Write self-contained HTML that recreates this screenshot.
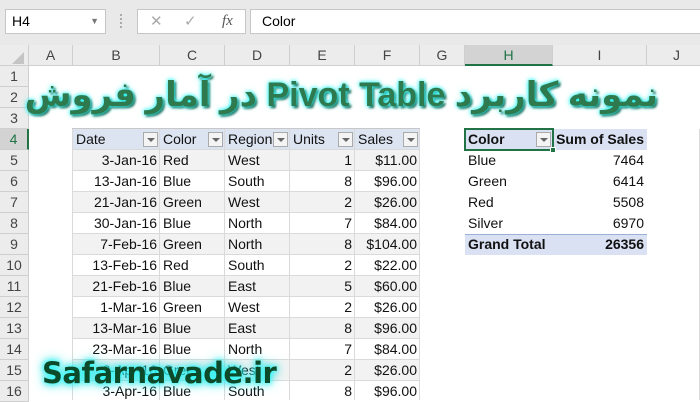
<!DOCTYPE html><html><head><meta charset="utf-8"><style>
*{margin:0;padding:0;box-sizing:border-box}
body{width:700px;height:400px;overflow:hidden;background:#fff;font-family:"Liberation Sans",Calibri,sans-serif;position:relative}
.a{position:absolute}
.top{left:0;top:0;width:700px;height:45px;background:#e9e9e9}
.box{background:#fff;border:1px solid #c6c6c6}
.ch{top:45px;height:21px;background:#ececec;border-right:1px solid #cfcfcf;border-bottom:1px solid #cfcfcf;font-size:14px;color:#444;text-align:center;line-height:21px}
.rh{left:0;width:29px;height:21px;background:#ececec;border-bottom:1px solid #cfcfcf;border-right:1px solid #cfcfcf;font-size:14px;color:#444;text-align:center;line-height:21px}
.vl{top:66px;width:1px;height:334px;background:#dadada}
.hl{left:29px;width:671px;height:1px;background:#dadada}
.c{height:21px;font-size:14px;line-height:21px;padding:0 3px;white-space:nowrap;color:#111}
.r{text-align:right}
.dd{width:15px;height:15px;border:1px solid #aaa;background:#f4f4f4;top:3px}
.dd:after{content:"";position:absolute;left:3px;top:5px;border:4px solid transparent;border-top:4px solid #666}
</style></head><body>
<div class="a top"></div>
<div class="a box" style="left:5px;top:9px;width:101px;height:25px;font-size:14px;line-height:23px;padding-left:6px">H4<span style="position:absolute;right:6px;top:0;font-size:9px;color:#777">▼</span></div>
<div class="a" style="left:120px;top:14px;width:2px;height:14px;border-left:2px dotted #aaa"></div>
<div class="a box" style="left:137px;top:9px;width:109px;height:25px;color:#aaa;font-size:15px;line-height:23px"><span style="position:absolute;left:12px">✕</span><span style="position:absolute;left:46px">✓</span><span style="position:absolute;left:84px;color:#555;font-style:italic;font-family:'Liberation Serif',serif">fx</span></div>
<div class="a box" style="left:250px;top:9px;width:460px;height:25px;font-size:14px;line-height:23px;padding-left:11px">Color</div>

<div class="a ch" style="left:0;width:29px"></div>
<div class="a" style="left:12px;top:52px;border-left:12px solid transparent;border-bottom:12px solid #c4c4c4"></div>
<div class="a ch" style="left:29px;width:44px">A</div>
<div class="a ch" style="left:73px;width:87px">B</div>
<div class="a ch" style="left:160px;width:65px">C</div>
<div class="a ch" style="left:225px;width:65px">D</div>
<div class="a ch" style="left:290px;width:65px">E</div>
<div class="a ch" style="left:355px;width:65px">F</div>
<div class="a ch" style="left:420px;width:45px">G</div>
<div class="a ch" style="left:465px;width:88px;background:#d3d3d3;border-bottom:2px solid #217346;color:#217346">H</div>
<div class="a ch" style="left:553px;width:94px">I</div>
<div class="a ch" style="left:647px;width:60px">J</div>

<div class="a rh" style="top:66px">1</div><div class="a rh" style="top:87px">2</div><div class="a rh" style="top:108px">3</div>
<div class="a rh" style="top:129px;background:#d3d3d3;color:#217346;border-right:2px solid #217346">4</div>
<div class="a rh" style="top:150px">5</div><div class="a rh" style="top:171px">6</div><div class="a rh" style="top:192px">7</div><div class="a rh" style="top:213px">8</div><div class="a rh" style="top:234px">9</div><div class="a rh" style="top:255px">10</div><div class="a rh" style="top:276px">11</div><div class="a rh" style="top:297px">12</div><div class="a rh" style="top:318px">13</div><div class="a rh" style="top:339px">14</div><div class="a rh" style="top:360px">15</div><div class="a rh" style="top:381px">16</div>

<div class="a" style="left:73px;top:129px;width:347px;height:21px;background:#dce3f1"></div>
<div class="a" style="left:73px;top:150px;width:347px;height:21px;background:#f2f2f2"></div>
<div class="a" style="left:73px;top:192px;width:347px;height:21px;background:#f2f2f2"></div>
<div class="a" style="left:73px;top:234px;width:347px;height:21px;background:#f2f2f2"></div>
<div class="a" style="left:73px;top:276px;width:347px;height:21px;background:#f2f2f2"></div>
<div class="a" style="left:73px;top:318px;width:347px;height:21px;background:#f2f2f2"></div>
<div class="a" style="left:73px;top:360px;width:347px;height:21px;background:#f2f2f2"></div>
<div class="a" style="left:465px;top:129px;width:182px;height:21px;background:#d9e1f2"></div>
<div class="a" style="left:465px;top:234px;width:182px;height:21px;background:#d9e1f2;border-top:1px solid #9bb0d6"></div>

<div class="a vl" style="left:72px;top:129px;height:271px"></div>
<div class="a vl" style="left:159px;top:129px;height:271px"></div>
<div class="a vl" style="left:224px;top:129px;height:271px"></div>
<div class="a vl" style="left:289px;top:129px;height:271px"></div>
<div class="a vl" style="left:354px;top:129px;height:271px"></div>
<div class="a vl" style="left:419px;top:129px;height:271px"></div>
<div class="a vl" style="left:699px;top:129px;height:271px"></div>
<div class="a hl" style="top:128px;left:72px;width:348px;background:#c8c8c8"></div>
<div class="a hl" style="top:149px;left:72px;width:348px"></div><div class="a hl" style="top:170px;left:72px;width:348px"></div><div class="a hl" style="top:191px;left:72px;width:348px"></div><div class="a hl" style="top:212px;left:72px;width:348px"></div><div class="a hl" style="top:233px;left:72px;width:348px"></div><div class="a hl" style="top:254px;left:72px;width:348px"></div><div class="a hl" style="top:275px;left:72px;width:348px"></div><div class="a hl" style="top:296px;left:72px;width:348px"></div><div class="a hl" style="top:317px;left:72px;width:348px"></div><div class="a hl" style="top:338px;left:72px;width:348px"></div><div class="a hl" style="top:359px;left:72px;width:348px"></div><div class="a hl" style="top:380px;left:72px;width:348px"></div>

<div class="a c" style="left:73px;top:129px">Date</div><div class="a dd" style="left:143px;top:132px"></div>
<div class="a c" style="left:160px;top:129px">Color</div><div class="a dd" style="left:208px;top:132px"></div>
<div class="a c" style="left:225px;top:129px">Region</div><div class="a dd" style="left:273px;top:132px"></div>
<div class="a c" style="left:290px;top:129px">Units</div><div class="a dd" style="left:338px;top:132px"></div>
<div class="a c" style="left:355px;top:129px">Sales</div><div class="a dd" style="left:403px;top:132px"></div>

<div class="a c r" style="left:73px;top:150px;width:87px">3-Jan-16</div><div class="a c" style="left:160px;top:150px">Red</div><div class="a c" style="left:225px;top:150px">West</div><div class="a c r" style="left:290px;top:150px;width:65px">1</div><div class="a c r" style="left:355px;top:150px;width:65px">$11.00</div>
<div class="a c r" style="left:73px;top:171px;width:87px">13-Jan-16</div><div class="a c" style="left:160px;top:171px">Blue</div><div class="a c" style="left:225px;top:171px">South</div><div class="a c r" style="left:290px;top:171px;width:65px">8</div><div class="a c r" style="left:355px;top:171px;width:65px">$96.00</div>
<div class="a c r" style="left:73px;top:192px;width:87px">21-Jan-16</div><div class="a c" style="left:160px;top:192px">Green</div><div class="a c" style="left:225px;top:192px">West</div><div class="a c r" style="left:290px;top:192px;width:65px">2</div><div class="a c r" style="left:355px;top:192px;width:65px">$26.00</div>
<div class="a c r" style="left:73px;top:213px;width:87px">30-Jan-16</div><div class="a c" style="left:160px;top:213px">Blue</div><div class="a c" style="left:225px;top:213px">North</div><div class="a c r" style="left:290px;top:213px;width:65px">7</div><div class="a c r" style="left:355px;top:213px;width:65px">$84.00</div>
<div class="a c r" style="left:73px;top:234px;width:87px">7-Feb-16</div><div class="a c" style="left:160px;top:234px">Green</div><div class="a c" style="left:225px;top:234px">North</div><div class="a c r" style="left:290px;top:234px;width:65px">8</div><div class="a c r" style="left:355px;top:234px;width:65px">$104.00</div>
<div class="a c r" style="left:73px;top:255px;width:87px">13-Feb-16</div><div class="a c" style="left:160px;top:255px">Red</div><div class="a c" style="left:225px;top:255px">South</div><div class="a c r" style="left:290px;top:255px;width:65px">2</div><div class="a c r" style="left:355px;top:255px;width:65px">$22.00</div>
<div class="a c r" style="left:73px;top:276px;width:87px">21-Feb-16</div><div class="a c" style="left:160px;top:276px">Blue</div><div class="a c" style="left:225px;top:276px">East</div><div class="a c r" style="left:290px;top:276px;width:65px">5</div><div class="a c r" style="left:355px;top:276px;width:65px">$60.00</div>
<div class="a c r" style="left:73px;top:297px;width:87px">1-Mar-16</div><div class="a c" style="left:160px;top:297px">Green</div><div class="a c" style="left:225px;top:297px">West</div><div class="a c r" style="left:290px;top:297px;width:65px">2</div><div class="a c r" style="left:355px;top:297px;width:65px">$26.00</div>
<div class="a c r" style="left:73px;top:318px;width:87px">13-Mar-16</div><div class="a c" style="left:160px;top:318px">Blue</div><div class="a c" style="left:225px;top:318px">East</div><div class="a c r" style="left:290px;top:318px;width:65px">8</div><div class="a c r" style="left:355px;top:318px;width:65px">$96.00</div>
<div class="a c r" style="left:73px;top:339px;width:87px">23-Mar-16</div><div class="a c" style="left:160px;top:339px">Blue</div><div class="a c" style="left:225px;top:339px">North</div><div class="a c r" style="left:290px;top:339px;width:65px">7</div><div class="a c r" style="left:355px;top:339px;width:65px">$84.00</div>
<div class="a c r" style="left:73px;top:360px;width:87px">2-Apr-16</div><div class="a c" style="left:160px;top:360px">Green</div><div class="a c" style="left:225px;top:360px">West</div><div class="a c r" style="left:290px;top:360px;width:65px">2</div><div class="a c r" style="left:355px;top:360px;width:65px">$26.00</div>
<div class="a c r" style="left:73px;top:381px;width:87px">3-Apr-16</div><div class="a c" style="left:160px;top:381px">Blue</div><div class="a c" style="left:225px;top:381px">South</div><div class="a c r" style="left:290px;top:381px;width:65px">8</div><div class="a c r" style="left:355px;top:381px;width:65px">$96.00</div>

<div class="a" style="left:464px;top:128px;width:90px;height:23px;border:2px solid #217346"></div>
<div class="a" style="left:550px;top:147px;width:6px;height:6px;background:#217346;border:1px solid #fff"></div>
<div class="a c" style="left:465px;top:129px;font-weight:bold">Color</div><div class="a dd" style="left:536px;top:132px"></div>
<div class="a c r" style="left:553px;top:129px;width:94px;font-weight:bold">Sum of Sales</div>
<div class="a c" style="left:465px;top:150px">Blue</div><div class="a c r" style="left:553px;top:150px;width:94px">7464</div>
<div class="a c" style="left:465px;top:171px">Green</div><div class="a c r" style="left:553px;top:171px;width:94px">6414</div>
<div class="a c" style="left:465px;top:192px">Red</div><div class="a c r" style="left:553px;top:192px;width:94px">5508</div>
<div class="a c" style="left:465px;top:213px">Silver</div><div class="a c r" style="left:553px;top:213px;width:94px">6970</div>
<div class="a c" style="left:465px;top:234px;font-weight:bold">Grand Total</div><div class="a c r" style="left:553px;top:234px;width:94px;font-weight:bold">26356</div>

<div class="a" dir="rtl" style="left:38px;top:66px;width:620px;text-align:center;font-family:'Liberation Sans','DejaVu Sans',sans-serif;font-weight:bold;font-size:34px;line-height:58px;color:#2e7a4e;text-shadow:0 0 3px #3ff,0 0 6px #4ee,2px 2px 2px #0a3d22;white-space:nowrap;overflow:visible">نمونه کاربرد Pivot Table در آمار فروش</div>

<div class="a" style="left:42px;top:350px;font-family:'DejaVu Sans','Liberation Sans',sans-serif;font-weight:bold;font-size:29px;line-height:46px;color:#0d4a2a;text-shadow:0 0 4px #3ff,0 0 8px #2ee,0 0 12px #2dd;white-space:nowrap;letter-spacing:-0.5px">Safarnavade.ir</div>
</body></html>
